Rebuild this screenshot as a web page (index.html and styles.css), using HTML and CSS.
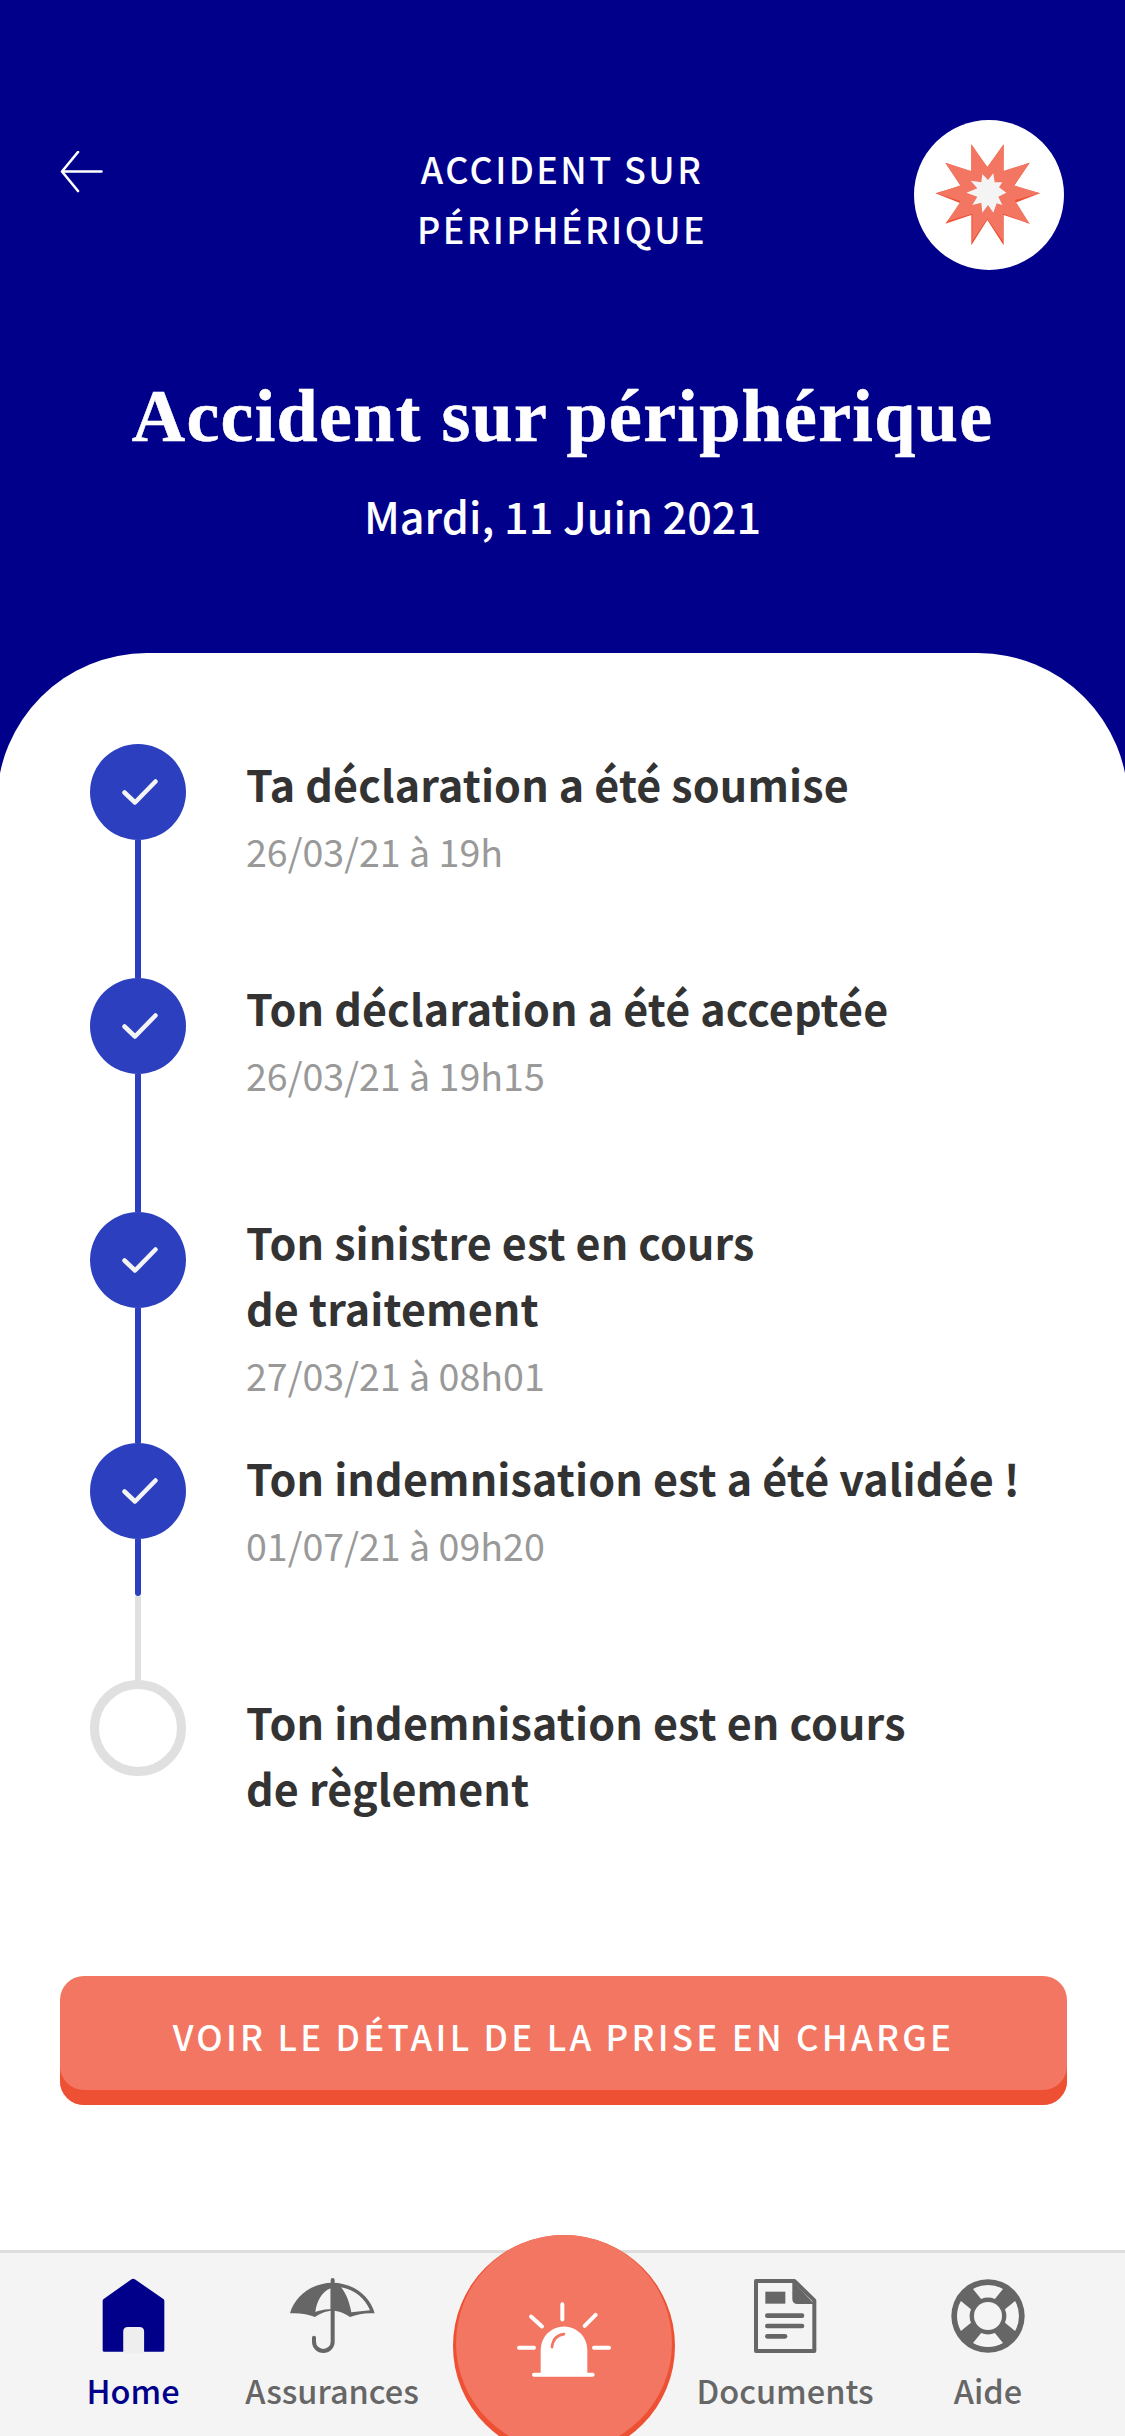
FILE: index.html
```html
<!DOCTYPE html>
<html lang="fr">
<head>
  <meta charset="UTF-8" />
  <title>Accident sur périphérique</title>
  <link rel="stylesheet" href="styles.css">
</head>
<body>
<div class="page">

  <!-- HEADER -->
  <header class="header">
    <div class="topbar">
      <svg class="back" viewBox="0 0 44 42" width="44" height="42">
        <path d="M41.5 20.5H3M18 1 2 20.5 18 40" fill="none" stroke="#fff" stroke-width="2.6" stroke-linecap="round" stroke-linejoin="round"/>
      </svg>
      <div class="topbar-title">ACCIDENT SUR<br>PÉRIPHÉRIQUE</div>
      <div class="badge">
        <svg viewBox="105 60 450 450" width="150" height="150">
          <polygon fill="#ee5033" points="277,133 325,204 374,133 374,215 452,188 405,258 483,280 405,310 452,371 374,345 374,436 325,360 277,436 277,345 199,371 245,310 169,280 245,258 199,188 277,215"/>
          <polygon fill="#f27662" points="277,133 325,200 374,133 372,213 452,188 405,256 483,280 407,300 452,371 372,341 372,424 325,356 280,424 280,341 205,364 245,304 173,280 245,256 199,188 277,213"/>
          <polygon fill="#f4f4f4" points="310,222 327,240 343,220 347,247 370,247 360,262 382,278 358,290 370,315 353,310 343,338 327,315 310,338 307,308 280,315 295,290 262,278 295,265 275,242 307,247"/>
        </svg>
      </div>
    </div>
    <h1 class="main-title">Accident sur périphérique</h1>
    <p class="main-date">Mardi, 11 Juin 2021</p>
  </header>

  <!-- TIMELINE -->
  <main class="card">
    <ul class="timeline">
      <li class="step step-a">
        <div class="marker">
          <span class="dot"><svg viewBox="0 0 36 26" width="36" height="26"><path d="M2.5 13.5 13 23.5 33.5 2.5" fill="none" stroke="#f4f4f4" stroke-width="4.5" stroke-linecap="round" stroke-linejoin="round"/></svg></span>
          <span class="line"></span>
        </div>
        <div class="step-text text-1">
          <div class="step-title">Ta déclaration a été soumise</div>
          <div class="step-date">26/03/21 à 19h</div>
        </div>
      </li>
      <li class="step step-a">
        <div class="marker">
          <span class="dot"><svg viewBox="0 0 36 26" width="36" height="26"><path d="M2.5 13.5 13 23.5 33.5 2.5" fill="none" stroke="#f4f4f4" stroke-width="4.5" stroke-linecap="round" stroke-linejoin="round"/></svg></span>
          <span class="line"></span>
        </div>
        <div class="step-text text-2">
          <div class="step-title">Ton déclaration a été acceptée</div>
          <div class="step-date">26/03/21 à 19h15</div>
        </div>
      </li>
      <li class="step step-b">
        <div class="marker">
          <span class="dot"><svg viewBox="0 0 36 26" width="36" height="26"><path d="M2.5 13.5 13 23.5 33.5 2.5" fill="none" stroke="#f4f4f4" stroke-width="4.5" stroke-linecap="round" stroke-linejoin="round"/></svg></span>
          <span class="line"></span>
        </div>
        <div class="step-text text-2">
          <div class="step-title">Ton sinistre est en cours<br>de traitement</div>
          <div class="step-date">27/03/21 à 08h01</div>
        </div>
      </li>
      <li class="step step-c">
        <div class="marker">
          <span class="dot"><svg viewBox="0 0 36 26" width="36" height="26"><path d="M2.5 13.5 13 23.5 33.5 2.5" fill="none" stroke="#f4f4f4" stroke-width="4.5" stroke-linecap="round" stroke-linejoin="round"/></svg></span>
          <span class="line line-short"></span>
          <span class="line line-todo"></span>
        </div>
        <div class="step-text text-3">
          <div class="step-title">Ton indemnisation est a été validée !</div>
          <div class="step-date">01/07/21 à 09h20</div>
        </div>
      </li>
      <li class="step">
        <div class="marker">
          <span class="dot dot-todo"></span>
        </div>
        <div class="step-text text-4">
          <div class="step-title">Ton indemnisation est en cours<br>de règlement</div>
        </div>
      </li>
    </ul>

    <a href="#" class="detail-btn">VOIR LE DÉTAIL DE LA PRISE EN CHARGE</a>
  </main>

  <!-- BOTTOM NAV -->
  <nav class="tabbar">
    <a href="#" class="tab tab-active">
      <svg viewBox="306 181 190 228" width="63" height="76">
        <path d="M308 250q0-4 3-6l84-60q5-3 10 0l86 60q3 2 3 6v148q0 5-5 5H313q-5 0-5-5z" fill="#00008b"/>
        <path d="M370 408v-66q0-14 14-14h35q14 0 14 14v66z" fill="#eee"/>
      </svg>
      <span>Home</span>
    </a>
    <a href="#" class="tab">
      <svg viewBox="27 24 258 228" width="86" height="76">
        <path d="M30 130C45 75 100 38 158 38 215 38 270 75 284 130 255 128 235 132 210 141 195 130 175 122 158 122 140 122 120 130 105 141 85 132 55 128 30 130Z" fill="#666"/>
        <path d="M152 55C125 65 110 95 106 126 130 118 140 118 152 118ZM183 52C225 60 255 85 270 121L214 127C208 95 198 70 183 52Z" fill="#f4f4f4"/>
        <path d="M158 30V215a28 28 0 0 1-56 0V203" fill="none" stroke="#666" stroke-width="12" stroke-linecap="round"/>
      </svg>
      <span>Assurances</span>
    </a>
    <span class="tab-gap"></span>
    <a href="#" class="tab">
      <svg viewBox="218 179 192 226" width="64" height="76">
        <path d="M227 187h115l60 58v152H227z" fill="none" stroke="#666" stroke-width="12" stroke-linejoin="round"/>
        <path d="M336 187v53q0 16 16 16h50z" fill="#666"/>
        <rect x="255" y="219" width="60" height="36" fill="#666"/>
        <rect x="254" y="284" width="118" height="14" rx="7" fill="#666"/>
        <rect x="254" y="315" width="118" height="14" rx="7" fill="#666"/>
        <rect x="254" y="346" width="67" height="14" rx="7" fill="#666"/>
      </svg>
      <span>Documents</span>
    </a>
    <a href="#" class="tab">
      <svg viewBox="31 11 228 228" width="76" height="76">
        <circle cx="145" cy="125" r="110" fill="#666"/>
        <circle cx="145" cy="125" r="42" fill="#f4f4f4"/>
        <g fill="#f4f4f4">
          <path d="M100 43.7A93 93 0 0 1 190 43.7L165.6 74A55 55 0 0 0 124.4 74Z"/>
          <path d="M100 43.7A93 93 0 0 1 190 43.7L165.6 74A55 55 0 0 0 124.4 74Z" transform="rotate(90 145 125)"/>
          <path d="M100 43.7A93 93 0 0 1 190 43.7L165.6 74A55 55 0 0 0 124.4 74Z" transform="rotate(180 145 125)"/>
          <path d="M100 43.7A93 93 0 0 1 190 43.7L165.6 74A55 55 0 0 0 124.4 74Z" transform="rotate(270 145 125)"/>
        </g>
      </svg>
      <span>Aide</span>
    </a>

    <a href="#" class="fab">
      <span class="fab-inner">
        <svg viewBox="258 242 288 230" width="96" height="77">
          <path d="M332 458v-70a70 70 0 0 1 140 0v70z" fill="#fff"/>
          <path d="M366 380c2-22 14-36 36-39" fill="none" stroke="#f27662" stroke-width="8" stroke-linecap="round"/>
          <g fill="none" stroke="#fff" stroke-width="12" stroke-linecap="round">
            <path d="M312 463h176M397 251v46M303 288l33 30M497 283l-33 33M267 382h45M492 382h45"/>
          </g>
        </svg>
      </span>
    </a>
  </nav>

</div>
</body>
</html>
```

FILE: styles.css
```css
* {
  box-sizing: border-box;
}
body {
  margin: 0;
  font-family: "Noto Sans CJK JP", "Noto Sans", sans-serif;
}
a {
  text-decoration: none;
}
.page {
  position: relative;
  width: 1125px;
  height: 2436px;
  display: flex;
  flex-direction: column;
  overflow: hidden;
  background-color: #00008b;
}

/* header */
.header {
  height: 653px;
  flex-shrink: 0;
  padding-top: 120px;
  color: #fff;
}
.topbar {
  display: grid;
  grid-template-columns: 1fr auto 1fr;
  padding: 0 61px 0 60px;
  height: 150px;
}
.back {
  margin-top: 31px;
}
.topbar-title {
  padding-top: 19px;
  font-size: 36px;
  line-height: 59.5px;
  letter-spacing: 2.4px;
  font-weight: 500;
  text-align: center;
}
.badge {
  justify-self: end;
  width: 150px;
  height: 150px;
  border-radius: 50%;
  background-color: #fff;
}
.main-title {
  margin: 106px 0 0;
  font-family: "Liberation Serif", serif;
  font-size: 74px;
  line-height: 80px;
  letter-spacing: 1.3px;
  font-weight: bold;
  -webkit-text-stroke: 0.6px #fff;
  text-align: center;
}
.main-date {
  margin: 30px 0 0;
  font-size: 43.2px;
  line-height: 58px;
  font-weight: 500;
  text-align: center;
}

/* timeline */
.card {
  flex: 1;
  margin: 0 -3px;
  padding: 91px 61px 0;
  background-color: #fff;
  border-radius: 150px 150px 0 0;
}
.timeline {
  list-style: none;
  margin: 0;
  padding: 0 0 0 32px;
}
.step {
  display: flex;
  gap: 60px;
}
.step-a {
  height: 234px;
}
.step-b {
  height: 231px;
}
.step-c {
  height: 237px;
}
.marker {
  width: 96px;
  flex-shrink: 0;
  display: flex;
  flex-direction: column;
  align-items: center;
}
.dot {
  width: 96px;
  height: 96px;
  flex-shrink: 0;
  display: flex;
  align-items: center;
  justify-content: center;
  border-radius: 50%;
  background-color: #2b3fbf;
}
.dot svg {
  margin-left: 4px;
}
.dot-todo {
  background-color: #fff;
  border: 9px solid #e0e0e0;
}
.line {
  flex: 1;
  width: 6px;
  background-color: #2b3fbf;
}
.line-short {
  flex: none;
  height: 57px;
  position: relative;
  z-index: 1;
  border-radius: 0 0 3px 3px;
}
.line-todo {
  background-color: #e0e0e0;
}
.text-1 {
  margin-top: 6px;
}
.text-2 {
  margin-top: -4px;
}
.text-3 {
  margin-top: 1px;
}
.text-4 {
  margin-top: 8px;
}
.step-title {
  font-size: 43px;
  line-height: 66px;
  letter-spacing: 0.15px;
  font-weight: 700;
  color: #333;
}
.step-date {
  margin-top: 3px;
  font-size: 37.6px;
  line-height: 64px;
  font-weight: 400;
  color: #999;
}

/* button */
.detail-btn {
  display: block;
  height: 129px;
  margin: 156px 0 0 2px;
  padding-top: 30px;
  border-radius: 24px;
  background-color: #f27662;
  box-shadow: inset 0 -15px 0 #ee5033;
  color: #fff;
  font-size: 35px;
  line-height: 60px;
  letter-spacing: 3.25px;
  font-weight: 500;
  text-align: center;
}

/* bottom nav */
.tabbar {
  height: 186px;
  flex-shrink: 0;
  display: grid;
  grid-template-columns: 200px 198px 264px 180px 226px;
  padding-left: 33px;
  background-color: #f4f4f4;
  border-top: 3px solid #ddd;
}
.tab {
  display: flex;
  flex-direction: column;
  align-items: center;
  padding-top: 25px;
  color: #666;
  font-size: 32.5px;
  line-height: 46px;
  font-weight: 500;
}
.tab svg {
  margin-bottom: 13px;
}
.tab-active {
  color: #00008b;
}
.fab {
  position: absolute;
  left: 453px;
  top: 2235px;
  width: 222px;
  height: 222px;
  padding: 0 3px;
  border-radius: 50%;
  background-color: #ee5033;
}
.fab-inner {
  display: flex;
  justify-content: center;
  padding-top: 66px;
  height: 216px;
  border-radius: 50%;
  background-color: #f27662;
}
```
